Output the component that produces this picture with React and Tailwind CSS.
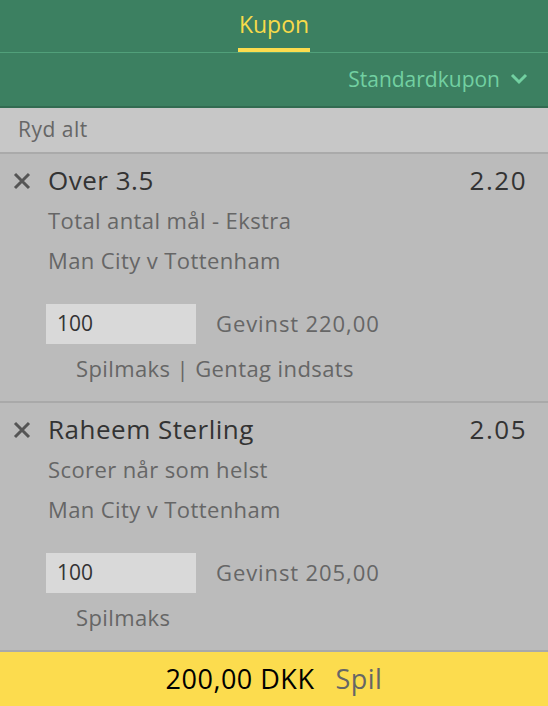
const bets = [
  {
    title: "Over 3.5",
    odds: "2.20",
    market: "Total antal mål - Ekstra",
    event: "Man City v Tottenham",
    stake: "100",
    win: "Gevinst 220,00",
    repeat: true,
  },
  {
    title: "Raheem Sterling",
    odds: "2.05",
    market: "Scorer når som helst",
    event: "Man City v Tottenham",
    stake: "100",
    win: "Gevinst 205,00",
    repeat: false,
  },
];

const BetItem = ({ bet }) => {
  return (
    <div className="h-[250px] border-b-2 border-[#a9a9a9] bg-[#bbbbbb] pr-[21px] pt-[11px] last:h-[248px] last:border-b-0">
      <div className="flex h-[32px] items-center">
        <div className="flex w-[48px] justify-center pr-[4px]">
          <svg width="18" height="18" viewBox="0 0 18 18" className="text-[#555]">
            <path d="M2 2 L16 16 M16 2 L2 16" stroke="currentColor" strokeWidth="3" />
          </svg>
        </div>
        <p className="flex-1 text-[26px] tracking-[0.5px] text-[#333]">{bet.title}</p>
        <p className="text-[26px] tracking-[1.5px] text-[#333]">{bet.odds}</p>
      </div>
      <div className="pl-[48px] text-[22px] leading-[40px] tracking-[0.4px] text-[#666]">
        <p className="mt-[3px]">{bet.market}</p>
        <p>{bet.event}</p>
      </div>
      <div className="mt-[24px] flex h-[40px] items-center pl-[46px]">
        <div className="flex h-[40px] w-[150px] items-center bg-[#d9d9d9] px-[11px] text-[21px] text-[#333]">
          {bet.stake}
        </div>
        <p className="ml-[20px] text-[22px] tracking-[0.9px] text-[#666]">{bet.win}</p>
      </div>
      <p className="mt-[12px] pl-[76px] text-[22px] leading-[24px] tracking-[0.4px] text-[#666]">
        Spilmaks
        {bet.repeat && <span> | Gentag indsats</span>}
      </p>
    </div>
  );
};

export default function App() {
  return (
    <div
      className="flex h-[706px] w-[548px] flex-col overflow-hidden bg-[#bbbbbb]"
      style={{ fontFamily: "'Open Sans', 'Noto Sans', sans-serif" }}
    >
      <div className="flex h-[53px] justify-center border-b border-[#51a07a] bg-[#3c8061]">
        <div className="flex h-[52px] flex-col items-center justify-between">
          <p className="pt-[8px] text-[23px] leading-[32px] text-[#f7da4a]">Kupon</p>
          <div className="h-[4px] w-[72px] bg-[#fcdc4e]" />
        </div>
      </div>
      <div className="flex h-[55px] items-center justify-end gap-[10px] border-b-2 border-[#326b51] bg-[#3c8061] pr-[20px]">
        <p className="text-[21px] text-[#72d0a1]">Standardkupon</p>
        <svg width="18" height="12" viewBox="0 0 18 12" className="text-[#72d0a1]">
          <path d="M2 2 L9 9 L16 2" fill="none" stroke="currentColor" strokeWidth="3" />
        </svg>
      </div>
      <div className="flex h-[46px] items-center border-b-2 border-[#aaaaaa] bg-[#c7c7c7] px-[18px] text-[21px] tracking-[0.5px] text-[#666]">
        Ryd alt
      </div>
      {bets.map((bet, index) => (
        <BetItem bet={bet} key={index} />
      ))}
      <div className="flex h-[54px] items-center justify-center gap-[21px] bg-[#fcdc4e]">
        <p className="text-[27px] tracking-[0.5px] text-black">200,00 DKK</p>
        <p className="text-[27px] tracking-[0.5px] text-[#666]">Spil</p>
      </div>
    </div>
  );
}
